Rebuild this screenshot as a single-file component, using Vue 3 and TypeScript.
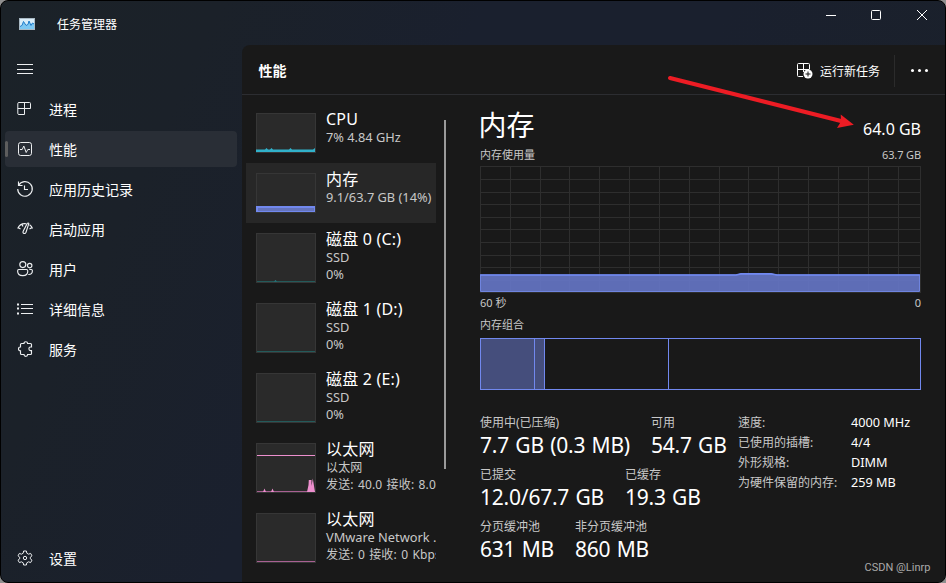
<script setup lang="ts">
interface NavItem {
  label: string
  icon: string
}

interface Resource {
  title: string
  lines: string[]
  kind: 'cpu' | 'memory' | 'disk' | 'net' | 'idle'
  blip?: boolean
  active?: boolean
}

interface Stat {
  label: string
  value: string
}

const nav: NavItem[] = [
  { label: '进程', icon: 'processes' },
  { label: '性能', icon: 'performance' },
  { label: '应用历史记录', icon: 'history' },
  { label: '启动应用', icon: 'startup' },
  { label: '用户', icon: 'users' },
  { label: '详细信息', icon: 'details' },
  { label: '服务', icon: 'services' },
]

const resources: Resource[] = [
  { title: 'CPU', lines: ['7% 4.84 GHz'], kind: 'cpu' },
  { title: '内存', lines: ['9.1/63.7 GB (14%)'], kind: 'memory', active: true },
  { title: '磁盘 0 (C:)', lines: ['SSD', '0%'], kind: 'disk', blip: true },
  { title: '磁盘 1 (D:)', lines: ['SSD', '0%'], kind: 'disk' },
  { title: '磁盘 2 (E:)', lines: ['SSD', '0%'], kind: 'disk' },
  { title: '以太网', lines: ['以太网', '发送: 40.0 接收: 8.0'], kind: 'net' },
  { title: '以太网', lines: ['VMware Network .', '发送: 0 接收: 0 Kbps'], kind: 'idle' },
]

const statRows: { name: string; stats: Stat[] }[] = [
  { name: 'use', stats: [{ label: '使用中(已压缩)', value: '7.7 GB (0.3 MB)' }, { label: '可用', value: '54.7 GB' }] },
  { name: 'commit', stats: [{ label: '已提交', value: '12.0/67.7 GB' }, { label: '已缓存', value: '19.3 GB' }] },
  { name: 'pool', stats: [{ label: '分页缓冲池', value: '631 MB' }, { label: '非分页缓冲池', value: '860 MB' }] },
]

const hardware: Stat[] = [
  { label: '速度:', value: '4000 MHz' },
  { label: '已使用的插槽:', value: '4/4' },
  { label: '外形规格:', value: 'DIMM' },
  { label: '为硬件保留的内存:', value: '259 MB' },
]

const gridX = [30, 60, 89, 119, 149, 179, 209, 239, 268, 298, 328, 358, 388, 418]
const gridY = [13, 26, 38, 51, 63, 76, 89, 101, 114]
</script>

<template>
  <div class="desktop">
    <div class="window">
      <header class="titlebar">
        <svg class="app-icon" width="16" height="12" viewBox="0 0 16 12">
          <rect x=".5" y=".5" width="15" height="11" fill="#d9edf8" stroke="#a9b9c4" />
          <path d="M1 9 3 8 4.5 4 7 8 9 7 10 3 12 8 13.5 5 15 6V11H1Z" fill="#7cc8f3" />
          <path d="M1 8.5 3 7.5 4.5 3.5 7 7.500 9 6.500 10 3 12 7.500 13.500 5 15 6" fill="none" stroke="#1879c9" />
        </svg>
        <span class="app-name">任务管理器</span>
        <div class="controls">
          <svg width="10" height="10" viewBox="0 0 10 10"><path d="M0 5.5H10" /></svg>
          <svg width="10" height="10" viewBox="0 0 10 10"><rect x=".5" y=".5" width="9" height="9" rx="1" /></svg>
          <svg width="10" height="10" viewBox="0 0 10 10"><path d="M0 0 10 10M10 0 0 10" /></svg>
        </div>
      </header>

      <div class="body">
        <nav class="sidebar">
          <div class="nav-item">
            <svg class="icon" viewBox="0 0 16 16"><path d="M0 3.5H16M0 8.5H16M0 12.5H16" /></svg>
          </div>
          <div v-for="item in nav" :key="item.label" class="nav-item" :class="{ current: item.icon === 'performance' }">
            <svg v-if="item.icon === 'processes'" class="icon" viewBox="0 0 16 16">
              <path d="M7.500 1.500V13.500M.8 7.500H13.500M2 1.500H12.500Q13.500 1.500 13.500 2.500V7.500M2 1.500Q.8 1.500.8 2.500V12.500Q.8 13.500 2 13.500H7.500" />
            </svg>
            <svg v-else-if="item.icon === 'performance'" class="icon" viewBox="0 0 16 16">
              <rect x="1.5" y="1.5" width="13" height="13" rx="2.2" />
              <path d="M3 8.500H5.200L6.800 5 9.200 11.500 10.800 8.500H13" />
            </svg>
            <svg v-else-if="item.icon === 'history'" class="icon curved" viewBox="0 0 16 16">
              <path d="M1.500.5V4.500H5.500M1.600 4.400A7.300 7.300 0 1 1 .7 8M7.500 4.500V8.500H11" />
            </svg>
            <svg v-else-if="item.icon === 'startup'" class="icon curved" viewBox="0 0 16 16">
              <path d="M.7 7.5A8 8 0 0 1 9 2.700M1 6.500 3.500 8M5 3.500 6 5.500M12.600 3.800A8 8 0 0 1 15.500 7.500M12.500 8 15 6.500M11.800 2.600 9 11.200Q8.300 12.900 6.900 12.400 5.500 11.800 6.200 10.300L10.200 2.400Q11.300 1.600 11.800 2.600Z" />
            </svg>
            <svg v-else-if="item.icon === 'users'" class="icon curved" viewBox="0 0 16 16">
              <circle cx="5.8" cy="3.6" r="3" /><circle cx="12.7" cy="4.6" r="2.2" />
              <path d="M1.800 8.500H9.400Q10.800 8.500 10.800 9.900 10.800 14.600 5.800 14.600.6 14.600.6 9.900.6 8.500 1.800 8.500ZM12.300 8.500H14.300Q15.400 8.500 15.400 9.700 15.400 13.700 11.300 13.500" />
            </svg>
            <svg v-else-if="item.icon === 'details'" class="icon" viewBox="0 0 16 16">
              <path d="M4 3.500H16M4 7.500H16M4 12.500H16" /><path stroke-width="2" d="M0 3.500H2M0 7.500H2M0 12.500H2" />
            </svg>
            <svg v-else class="icon curved" viewBox="0 0 16 16">
              <path d="M7 2.500Q7 .7 8.800.7T10.600 2.500H13.500Q14.500 2.500 14.500 3.500V6H13.500Q11.900 6 11.900 7.800T13.500 9.600H14.500V12.500Q14.500 13.500 13.500 13.500H10.600Q10.600 15.300 8.800 15.300T7 13.500H4.500Q3.500 13.500 3.500 12.500V9.800Q1.500 9.800 1.500 7.900T3.500 6V3.500Q3.500 2.500 4.500 2.500Z" />
            </svg>
            <span>{{ item.label }}</span>
          </div>
          <div class="nav-item settings">
            <svg class="icon" viewBox="0 0 16 16">
              <path d="M6.600 1H9.400L9.800 3.200 11.600 4.200 13.600 3.400 15 5.800 13.300 7.200V8.800L15 10.200 13.600 12.600 11.600 11.800 9.800 12.800 9.400 15H6.600L6.200 12.800 4.400 11.800 2.400 12.600 1 10.200 2.700 8.800V7.200L1 5.800 2.400 3.400 4.400 4.200 6.200 3.200Z" />
              <circle cx="8" cy="8" r="1.7" />
            </svg>
            <span>设置</span>
          </div>
        </nav>

        <main class="main">
          <div class="toolbar">
            <h1>性能</h1>
            <svg class="run-icon" width="16" height="16" viewBox="0 0 16 16">
              <path d="M6 13.500H1.500Q.5 13.500.5 12.500V1.500Q.5.5 1.500.5H11.500Q12.500.5 12.500 1.500V6M6.500.5V9M.5 6.500H12.500" fill="none" stroke="#fff" />
              <circle cx="11" cy="11" r="4.5" fill="#fff" /><path d="M8.500 11H13.500M11 8.500V13.500" stroke="#191919" />
            </svg>
            <span class="run">运行新任务</span>
            <div class="more"><i></i><i></i><i></i></div>
          </div>

          <div class="content">
            <div class="list">
              <div v-for="(r, i) in resources" :key="i" class="resource" :class="[r.kind, { active: r.active }]">
                <svg class="thumb" width="60" :height="r.lines.length === 1 ? 40 : 50" :viewBox="r.lines.length === 1 ? '0 0 60 40' : '0 0 60 50'">
                  <rect class="frame" x=".5" y=".5" width="59" :height="r.lines.length === 1 ? 39 : 49" />
                  <path v-if="r.kind === 'cpu'" fill="#31b1ca" d="M0 36.500H9L10.500 35 12 36.500H14L15.500 35 17 36.500H33L34.500 35 36 36.500H57L59 35V39H0Z" />
                  <template v-else-if="r.kind === 'memory'">
                    <rect y="33" width="59" height="6" fill="#7188ee" /><rect x="2" y="35" width="56" height="3" fill="#6574bd" />
                  </template>
                  <template v-else-if="r.kind === 'disk'">
                    <path d="M1 48.500H59" stroke="#235a5a" /><path v-if="r.blip" d="M18 48.500 19.500 47 21 48.500" fill="#27818a" />
                  </template>
                  <template v-else>
                    <path d="M1 48.500H59" stroke="#a86092" />
                    <template v-if="r.kind === 'net'">
                      <path d="M1 12.500H59" stroke="#ed8fce" />
                      <path d="M7 49 8.500 45.500 10 49ZM15 49 16.500 45.500 18 49ZM51 49 52.500 42 52.800 37H55.500V43L56.800 35.500 59 49Z" fill="#ed8fce" />
                    </template>
                  </template>
                </svg>
                <div class="resource-text">
                  <div class="resource-title">{{ r.title }}</div>
                  <div v-for="line in r.lines" :key="line" class="resource-line" :class="{ cjk: line.includes('送') || line === '以太网' }">{{ line }}</div>
                </div>
              </div>
            </div>
            <div class="track"><div class="scroll-thumb"></div></div>

            <section class="detail">
              <div class="heading"><h2>内存</h2><span>64.0 GB</span></div>
              <div class="caption usage"><span>内存使用量</span><span class="total">63.7 GB</span></div>
              <svg class="graph" width="441" height="127" viewBox="0 0 441 127">
                <g stroke="#2e2e2e">
                  <path v-for="x in gridX" :key="'x' + x" :d="`M${x + 0.5} 0V127`" />
                  <path v-for="y in gridY" :key="'y' + y" :d="`M0 ${y + 0.5}H441`" />
                  <rect x=".5" y=".5" width="440" height="126" fill="none" />
                </g>
                <path d="M.5 125.500V109H256L261 107.900H291L297 109H439.500V125.500Z" fill="#6879cc" fill-opacity=".88" stroke="#6f84df" />
                <path d="M0 109H256L261 107.900H291L297 109H440" fill="none" stroke="#7088ef" stroke-width="1.6" />
              </svg>
              <div class="caption axis"><span>60 秒</span><span>0</span></div>
              <div class="caption composition">内存组合</div>
              <div class="slots"><i class="used"></i><i class="modified"></i><i class="standby"></i><i class="free"></i></div>

              <div class="summary">
                <div class="stats">
                  <div v-for="row in statRows" :key="row.name" class="stat-row" :class="row.name">
                    <div v-for="s in row.stats" :key="s.label" class="stat">
                      <div class="label">{{ s.label }}</div><div class="value">{{ s.value }}</div>
                    </div>
                  </div>
                </div>
                <dl class="hardware">
                  <template v-for="h in hardware" :key="h.label"><dt>{{ h.label }}</dt><dd>{{ h.value }}</dd></template>
                </dl>
              </div>
            </section>
          </div>
        </main>
      </div>
    </div>

    <svg class="arrow" width="190" height="60" viewBox="0 0 190 60">
      <path d="M6 8 178 51.300" stroke="#ed1c24" stroke-width="4" stroke-linecap="round" />
      <path d="M189.800 54.700 176.700 44.500 177 51.500 173 58Z" fill="#ed1c24" />
    </svg>
    <span class="watermark">CSDN @Linrp</span>
  </div>
</template>

<style>
body {
  margin: 0;
  background: #8c8c8c;
}
</style>

<style scoped>
* {
  box-sizing: border-box;
}
.desktop {
  position: relative;
  width: 946px;
  height: 583px;
  overflow: hidden;
  background: #8f8f8f;
  color: #fff;
  font-family: "Noto Sans", "Noto Sans CJK SC", sans-serif;
  font-size: 12px;
  white-space: nowrap;
}
.window {
  width: 946px;
  height: 583px;
  display: flex;
  flex-direction: column;
  border: 1px solid #000;
  border-radius: 8px;
  overflow: hidden;
  background: linear-gradient(115deg, #1b2228 0%, #1b2129 18%, #1a202e 40%, #1a202e 60%, #1b2129 100%);
}
.titlebar {
  height: 44px;
  display: flex;
  padding-left: 18px;
}
.app-icon {
  margin-top: 17px;
}
.app-name {
  margin-left: 22px;
  line-height: 48px;
}
.controls {
  display: flex;
  gap: 36px;
  margin: 9px 18px 0 auto;
}
.controls svg {
  fill: none;
  stroke: #fff;
  overflow: visible;
}
.controls svg:first-child {
  margin-right: -1px;
}
.body {
  flex: 1;
  display: flex;
  min-height: 0;
}
.sidebar {
  width: 241px;
  padding: 6px 4px;
  display: flex;
  flex-direction: column;
  gap: 4px;
}
.nav-item {
  height: 36px;
  width: 232px;
  display: flex;
  align-items: center;
  gap: 16px;
  padding-left: 12px;
  border-radius: 4px;
  font-size: 14px;
}
.nav-item span {
  line-height: 20px;
  padding-top: 2px;
}
.nav-item.current {
  position: relative;
  background: #292e36;
}
.nav-item.current::before {
  content: "";
  position: absolute;
  left: 0;
  top: 10px;
  width: 3px;
  height: 16px;
  border-radius: 2px;
  background: #5d5d5d;
}
.icon {
  width: 16px;
  height: 16px;
  fill: none;
  stroke: #eceef0;
  overflow: visible;
}
.icon.curved {
  stroke-width: 1.15;
}
.settings {
  margin-top: auto;
}
.main {
  flex: 1;
  display: flex;
  flex-direction: column;
  min-width: 0;
  background: #191919;
  border-top-left-radius: 8px;
  overflow: hidden;
}
.toolbar {
  height: 50px;
  flex: none;
  display: flex;
  align-items: center;
  border-bottom: 1px solid #2c2d31;
  padding: 2px 0 0 16.5px;
}
h1 {
  margin: 0;
  font-size: 14px;
  font-weight: 600;
  line-height: 20px;
}
.run-icon {
  margin-left: auto;
}
.run {
  margin-left: 7px;
}
.more {
  display: flex;
  align-items: center;
  gap: 4px;
  height: 32px;
  margin-left: 14px;
  padding: 0 17px 0 16px;
  border-left: 1px solid #2b2b2b;
}
.more i {
  width: 3px;
  height: 3px;
  border-radius: 50%;
  background: #fff;
}
.content {
  flex: 1;
  display: flex;
  min-height: 0;
}
.list {
  width: 194px;
  padding: 8px 0 0 4px;
  overflow: hidden;
}
.resource {
  display: flex;
  height: 70px;
  padding-left: 10px;
  gap: 10px;
  overflow: hidden;
}
.resource.cpu,
.resource.memory {
  height: 60px;
}
.resource.active {
  background: #272727;
}
.thumb {
  flex: none;
  margin-top: 10px;
}
.frame {
  fill: #2a2a2a;
  stroke: #363636;
}
.resource-text {
  padding-top: 6px;
}
.resource-title {
  font-size: 16px;
  line-height: 20px;
  letter-spacing: .2px;
}
.resource-line {
  color: #c8c8c8;
  font-size: 12.8px;
  line-height: 17px;
}
.resource-line.cjk {
  font-size: 12px;
  letter-spacing: .15px;
  word-spacing: 1px;
}
.track {
  width: 17px;
  padding: 25px 0 0 8px;
}
.scroll-thumb {
  width: 2px;
  height: 349px;
  background: #9a9a9a;
}
.detail {
  width: 441px;
  margin-left: 27px;
}
.heading {
  display: flex;
  justify-content: space-between;
  height: 50px;
}
.heading h2 {
  margin: 0 0 0 -1.5px;
  font-size: 28px;
  font-weight: 400;
  line-height: 60px;
}
.heading span {
  font-size: 16px;
  line-height: 68px;
}
.caption {
  display: flex;
  justify-content: space-between;
  font-size: 11px;
  line-height: 20px;
  color: #c8c8c8;
}
.caption .total {
  letter-spacing: -.12px;
}
.usage {
  height: 21px;
}
.graph {
  display: block;
}
.axis {
  height: 22px;
}
.composition {
  height: 23px;
}
.slots {
  display: flex;
  height: 52px;
  border: 1px solid #7188ee;
}
.slots i {
  border-right: 1px solid #7188ee;
}
.slots .used {
  width: 54px;
  background: #454e7c;
}
.slots .modified {
  width: 10px;
  background: #454e7c;
}
.slots .standby {
  width: 124px;
}
.slots .free {
  flex: 1;
  border: 0;
}
.summary {
  display: flex;
  margin-top: 24px;
}
.stats {
  width: 258px;
}
.stat-row {
  display: grid;
  height: 52px;
}
.stat-row.use {
  grid-template-columns: 171px auto;
}
.stat-row.commit {
  grid-template-columns: 145px auto;
}
.stat-row.pool {
  grid-template-columns: 95px auto;
}
.label {
  color: #c8c8c8;
  line-height: 18px;
}
.value {
  font-size: 21px;
  line-height: 26px;
  letter-spacing: -.22px;
  word-spacing: 1.1px;
}
.hardware {
  margin: 0;
  display: grid;
  grid-template-columns: 113px auto;
  grid-auto-rows: 20px;
  line-height: 18px;
}
.hardware dt {
  color: #c8c8c8;
}
.hardware dd {
  margin: 0;
  font-size: 12.7px;
  line-height: 17px;
}
.arrow {
  position: absolute;
  left: 664px;
  top: 70px;
}
.watermark {
  position: absolute;
  left: 864.5px;
  top: 560px;
  font: 11px/16px Roboto, sans-serif;
  color: #aaa;
}
</style>
